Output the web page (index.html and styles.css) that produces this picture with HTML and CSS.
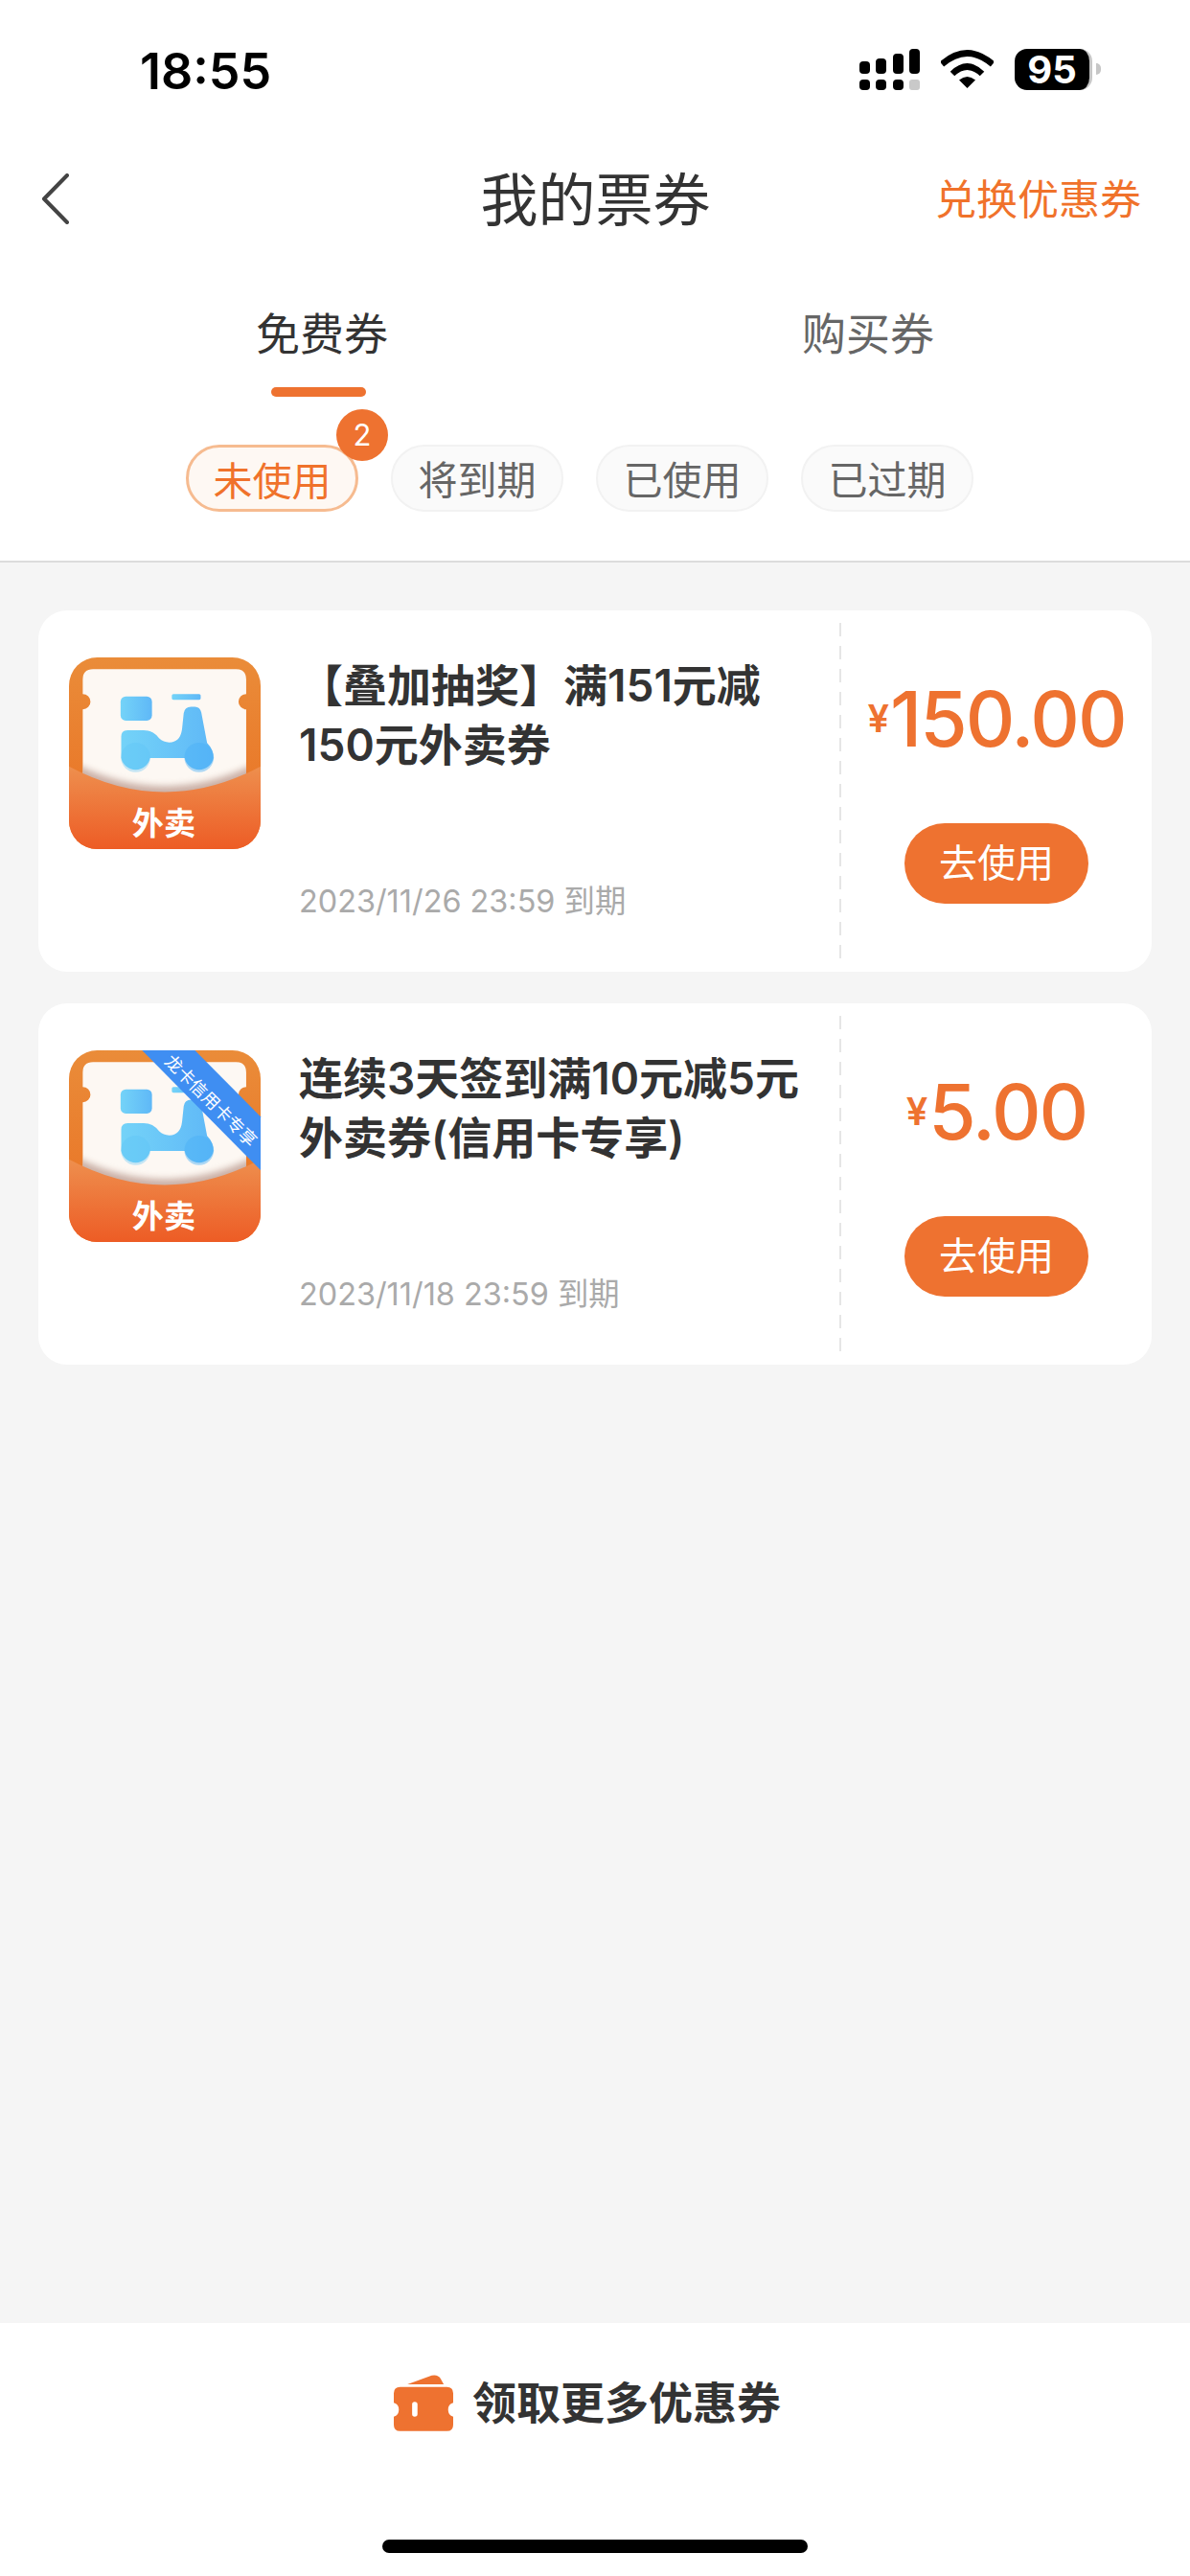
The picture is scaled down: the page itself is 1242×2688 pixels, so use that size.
FILE: index.html
```html
<!DOCTYPE html>
<html lang="zh-CN">
<head>
    <meta charset="UTF-8">
    <meta name="viewport" content="width=device-width, initial-scale=1.0">
    <title>我的票券</title>
    <link rel="stylesheet" href="styles.css">
</head>
<body>
    <svg class="defs" aria-hidden="true">
        <defs>
            <linearGradient id="backGrad" x1="0" y1="0" x2="0" y2="1">
                <stop offset="0" stop-color="#ea8c39"/>
                <stop offset="1" stop-color="#e96f22"/>
            </linearGradient>
            <linearGradient id="pocketGrad" x1="0" y1="0" x2="0" y2="1">
                <stop offset="0" stop-color="#ee8f4e"/>
                <stop offset="1" stop-color="#ed5c25"/>
            </linearGradient>
            <linearGradient id="bikeGrad" x1="0" y1="0" x2="1" y2="0">
                <stop offset="0" stop-color="#74d3f8"/>
                <stop offset="1" stop-color="#5fb8f7"/>
            </linearGradient>
            <filter id="soft" x="-10%" y="-30%" width="120%" height="160%">
                <feGaussianBlur stdDeviation="11"/>
            </filter>
            <clipPath id="iconClip">
                <rect x="97" y="78" width="598" height="598" rx="88"/>
            </clipPath>
            <clipPath id="ticketClip">
                <rect x="140" y="115" width="510" height="400"/>
            </clipPath>
            <symbol id="takeout" viewBox="97 78 598 598">
                <g clip-path="url(#iconClip)">
                    <rect x="97" y="78" width="598" height="598" fill="url(#backGrad)"/>
                    <path d="M172 115 H618 Q650 115 650 147 V192 A23 23 0 0 0 650 240 V520 H140 V240 A23 23 0 0 0 140 192 V147 Q140 115 172 115Z" fill="#fdf8f3"/>
                    <g clip-path="url(#ticketClip)">
                        <path d="M97 400 Q396 560 695 400 V520 H97Z" fill="#a77f72" opacity="0.6" filter="url(#soft)"/>
                    </g>
                    <rect x="258" y="200" width="98" height="75" rx="16" fill="url(#bikeGrad)"/>
                    <rect x="418" y="192" width="90" height="18" rx="5" fill="url(#bikeGrad)"/>
                    <path d="M260 325 Q260 305 280 305 H330 Q360 305 378 330 Q392 343 410 343 Q445 343 450 300 L455 252 Q458 232 478 232 H490 Q506 232 510 250 L528 345 Q548 365 548 392 A46 46 0 0 1 458 392 H350 A46 46 0 0 1 260 392Z" fill="url(#bikeGrad)"/>
                    <circle cx="305" cy="390" r="46" fill="#5cc3f6" opacity="0.35"/>
                    <circle cx="503" cy="390" r="46" fill="#4ab0f6" opacity="0.45"/>
                    <path d="M97 418 Q396 578 695 418 V676 H97Z" fill="url(#pocketGrad)"/>
                </g>
            </symbol>
        </defs>
    </svg>

    <div class="page">
        <div class="status-bar">
            <span class="time">18:55</span>
            <div class="status-icons">
                <svg class="signal" width="63" height="43" viewBox="0 0 63 43">
                    <rect x="0" y="13" width="11" height="13" rx="4"/>
                    <rect x="17" y="10" width="11" height="16" rx="4"/>
                    <rect x="35" y="5" width="11" height="21" rx="4"/>
                    <rect x="52" y="0" width="11" height="26" rx="4"/>
                    <rect x="0" y="32" width="11" height="11" rx="4"/>
                    <rect x="17" y="32" width="11" height="11" rx="4"/>
                    <rect x="35" y="32" width="11" height="11" rx="4"/>
                    <rect x="52" y="32" width="11" height="11" rx="3" fill="#c9c9c9"/>
                </svg>
                <svg class="wifi" width="55" height="40" viewBox="0 0 55 40">
                    <path d="M1 15 Q27.500 -8 54 15" fill="none" stroke="#000" stroke-width="6.500"/>
                    <path d="M12 25 Q27.500 10 43 25" fill="none" stroke="#000" stroke-width="6.500"/>
                    <path d="M27.500 40 L19 31.500 Q27.500 24.500 36 31.500Z"/>
                </svg>
                <div class="battery">
                    <div class="battery-body">95</div>
                    <div class="battery-cap"></div>
                </div>
            </div>
        </div>

        <div class="nav-bar">
            <svg class="back" width="29" height="53" viewBox="0 0 29 53">
                <path d="M27 2 L3 26.500 L27 51" fill="none" stroke="#444" stroke-width="4" stroke-linecap="round" stroke-linejoin="round"/>
            </svg>
            <div class="nav-title">我的票券</div>
            <div class="nav-link">兑换优惠券</div>
        </div>

        <div class="tabs">
            <div class="tab tab-active">
                <span class="tab-label">免费券</span>
                <span class="tab-line"></span>
            </div>
            <div class="tab">
                <span class="tab-label">购买券</span>
            </div>
        </div>

        <div class="filters">
            <div class="pill pill-active">未使用<span class="badge">2</span></div>
            <div class="pill">将到期</div>
            <div class="pill">已使用</div>
            <div class="pill">已过期</div>
        </div>

        <div class="list">
            <div class="card">
                <svg class="card-icon" width="200" height="200" viewBox="97 78 598 598">
                    <use href="#takeout" x="97" y="78" width="598" height="598"/>
                    <text x="393" y="632" class="icon-word">外卖</text>
                </svg>
                <div class="card-info">
                    <div class="card-title">【叠加抽奖】满151元减<br>150元外卖券</div>
                    <div class="card-date">2023/11/26 23:59 到期</div>
                </div>
                <div class="card-dash"></div>
                <div class="card-side">
                    <div class="price"><span class="yen">¥</span>150.00</div>
                    <div class="use-btn">去使用</div>
                </div>
            </div>
            <div class="card">
                <svg class="card-icon" width="200" height="200" viewBox="97 78 598 598">
                    <use href="#takeout" x="97" y="78" width="598" height="598"/>
                    <text x="393" y="632" class="icon-word">外卖</text>
                    <polygon points="325,78 490,78 695,285 695,452" fill="#3f8ef2"/>
                    <text class="ribbon-word" x="0" y="0" transform="translate(543 232) rotate(45)">龙卡信用卡专享</text>
                </svg>
                <div class="card-info">
                    <div class="card-title">连续3天签到满10元减5元<br>外卖券(信用卡专享)</div>
                    <div class="card-date">2023/11/18 23:59 到期</div>
                </div>
                <div class="card-dash"></div>
                <div class="card-side">
                    <div class="price"><span class="yen">¥</span>5.00</div>
                    <div class="use-btn">去使用</div>
                </div>
            </div>
        </div>

        <div class="footer">
            <div class="footer-row">
                <svg class="footer-icon" width="62" height="59" viewBox="92 230 188 178">
                    <path d="M135 260 L212 232 Q232 228 240 242 L250 260Z" fill="#ee7230"/>
                    <path fill-rule="evenodd" fill="#ee7230" d="M112 268 H260 Q280 268 280 288 V318 Q264 322 264 340 Q264 358 280 362 V388 Q280 408 260 408 H112 Q92 408 92 388 V362 Q108 358 108 340 Q108 322 92 318 V288 Q92 268 112 268Z M158 315 Q150 315 150 323 V354 Q150 362 158 362 Q167 362 167 354 V323 Q167 315 158 315Z"/>
                </svg>
                <span class="footer-text">领取更多优惠券</span>
            </div>
            <div class="home-bar"></div>
        </div>
    </div>
</body>
</html>
```

FILE: styles.css
```css
* {
    box-sizing: border-box;
}

body {
    margin: 0;
    background: #f5f5f5;
    font-family: "Noto Sans CJK SC", "Noto Sans", sans-serif;
    color: #333;
}

.defs {
    position: absolute;
    width: 0;
    height: 0;
}

.page {
    width: 1242px;
    height: 2688px;
    display: flex;
    flex-direction: column;
    overflow: hidden;
}

/* status bar */
.status-bar {
    height: 148px;
    padding: 0 93px 0 146px;
    background: #fff;
    display: flex;
    align-items: center;
    justify-content: space-between;
}

.time {
    font-family: Inter, sans-serif;
    font-size: 52px;
    font-weight: 600;
    color: #000;
}

.status-icons {
    display: flex;
    align-items: center;
    gap: 22px;
    margin-bottom: 4px;
}

.battery {
    display: flex;
    align-items: center;
}

.battery-body {
    width: 81px;
    height: 43px;
    background: #000;
    border-right: 3px solid #c6c6c6;
    border-radius: 13px;
    color: #fff;
    font-family: Inter, sans-serif;
    font-size: 40px;
    font-weight: 700;
    line-height: 43px;
    text-align: center;
}

.battery-cap {
    width: 5px;
    height: 12px;
    margin-left: 4px;
    background: #c6c6c6;
    border-radius: 0 6px 6px 0;
}

/* nav */
.nav-bar {
    height: 118px;
    padding: 0 51px;
    background: #fff;
    display: grid;
    grid-template-columns: 1fr 239px 1fr;
    align-items: center;
}

.back {
    margin-left: -8px;
}

.nav-title {
    margin-bottom: 6px;
    font-size: 60px;
    white-space: nowrap;
    color: #333;
}

.nav-link {
    justify-self: end;
    margin-bottom: 4px;
    font-size: 43px;
    color: #f0722b;
}

/* tabs */
.tabs {
    height: 148px;
    padding: 0 51px;
    background: #fff;
    display: grid;
    grid-template-columns: 1fr 1fr;
}

.tab {
    padding-top: 49px;
    display: flex;
    flex-direction: column;
    align-items: center;
}

.tab-label {
    height: 60px;
    font-size: 46px;
    line-height: 60px;
    color: #666;
}

.tab-active .tab-label {
    color: #333;
}

.tab-line {
    width: 99px;
    height: 10px;
    margin-top: 29px;
    margin-right: 8px;
    background: #ee7230;
    border-radius: 5px;
}

/* filter pills */
.filters {
    padding: 50px 0 51px 194px;
    background: #fff;
    border-bottom: 2px solid #dcdcdc;
    display: flex;
    gap: 34px;
}

.pill {
    position: relative;
    width: 180px;
    height: 70px;
    background: #fafafa;
    border: 2px solid #f2f2f2;
    border-radius: 35px;
    font-size: 41px;
    line-height: 64px;
    text-align: center;
    color: #666;
}

.pill-active {
    background: #fef8f3;
    border: 3px solid #f6bb90;
    color: #f0722b;
}

.badge {
    position: absolute;
    top: -40px;
    right: -34px;
    width: 54px;
    height: 54px;
    background: #ee7230;
    border-radius: 50%;
    color: #fff;
    font-family: Inter, sans-serif;
    font-size: 31px;
    line-height: 54px;
    text-align: center;
}

/* coupon list */
.list {
    flex: 1;
    padding: 50px 40px 0;
    display: flex;
    flex-direction: column;
    gap: 33px;
}

.card {
    height: 377px;
    padding-left: 32px;
    background: #fff;
    border-radius: 30px;
    display: flex;
}

.card-icon {
    flex: none;
    margin-top: 49px;
    overflow: visible;
}

.icon-word {
    fill: #fff;
    font-family: "Noto Sans CJK SC", sans-serif;
    font-size: 99px;
    font-weight: 700;
    text-anchor: middle;
}

.ribbon-word {
    fill: #fff;
    font-family: "Noto Sans CJK SC", sans-serif;
    font-size: 54px;
    text-anchor: middle;
    dominant-baseline: central;
}

.card-info {
    flex: 1;
    margin-left: 40px;
    padding: 47px 0 51px;
    display: flex;
    flex-direction: column;
    justify-content: space-between;
}

.card-title {
    font-family: Inter, "Noto Sans CJK SC", sans-serif;
    font-size: 46px;
    font-weight: 600;
    line-height: 62px;
    color: #333;
}

.card-date {
    font-family: Inter, "Noto Sans CJK SC", sans-serif;
    font-size: 32.400px;
    line-height: 44px;
    color: #aaa;
}

.card-dash {
    flex: none;
    width: 2px;
    margin: 13px 0 14px;
    background: repeating-linear-gradient(to bottom, #e6e6e6 0, #e6e6e6 14px, transparent 14px, transparent 24px);
}

.card-side {
    flex: none;
    width: 324px;
    padding-top: 62px;
    display: flex;
    flex-direction: column;
    align-items: center;
}

.price {
    height: 100px;
    display: flex;
    align-items: center;
    font-family: Inter, sans-serif;
    font-size: 80px;
    font-weight: 500;
    letter-spacing: -2px;
    color: #ee7230;
}

.yen {
    margin-right: 3px;
    font-size: 40px;
    font-weight: 600;
}

.use-btn {
    width: 192px;
    height: 84px;
    margin-top: 60px;
    background: #ee7230;
    border-radius: 42px;
    color: #fff;
    font-size: 40px;
    line-height: 78px;
    text-align: center;
}

/* footer */
.footer {
    height: 264px;
    padding: 50px 0 24px;
    background: #fff;
    display: flex;
    flex-direction: column;
}

.footer-row {
    padding-left: 411px;
    display: flex;
    align-items: center;
    gap: 20px;
}

.footer-text {
    margin-bottom: 6px;
    font-size: 46px;
    font-weight: 600;
    line-height: 60px;
    color: #333;
}

.home-bar {
    width: 444px;
    height: 14px;
    margin: auto 0 0 399px;
    background: #000;
    border-radius: 7px;
}
```
